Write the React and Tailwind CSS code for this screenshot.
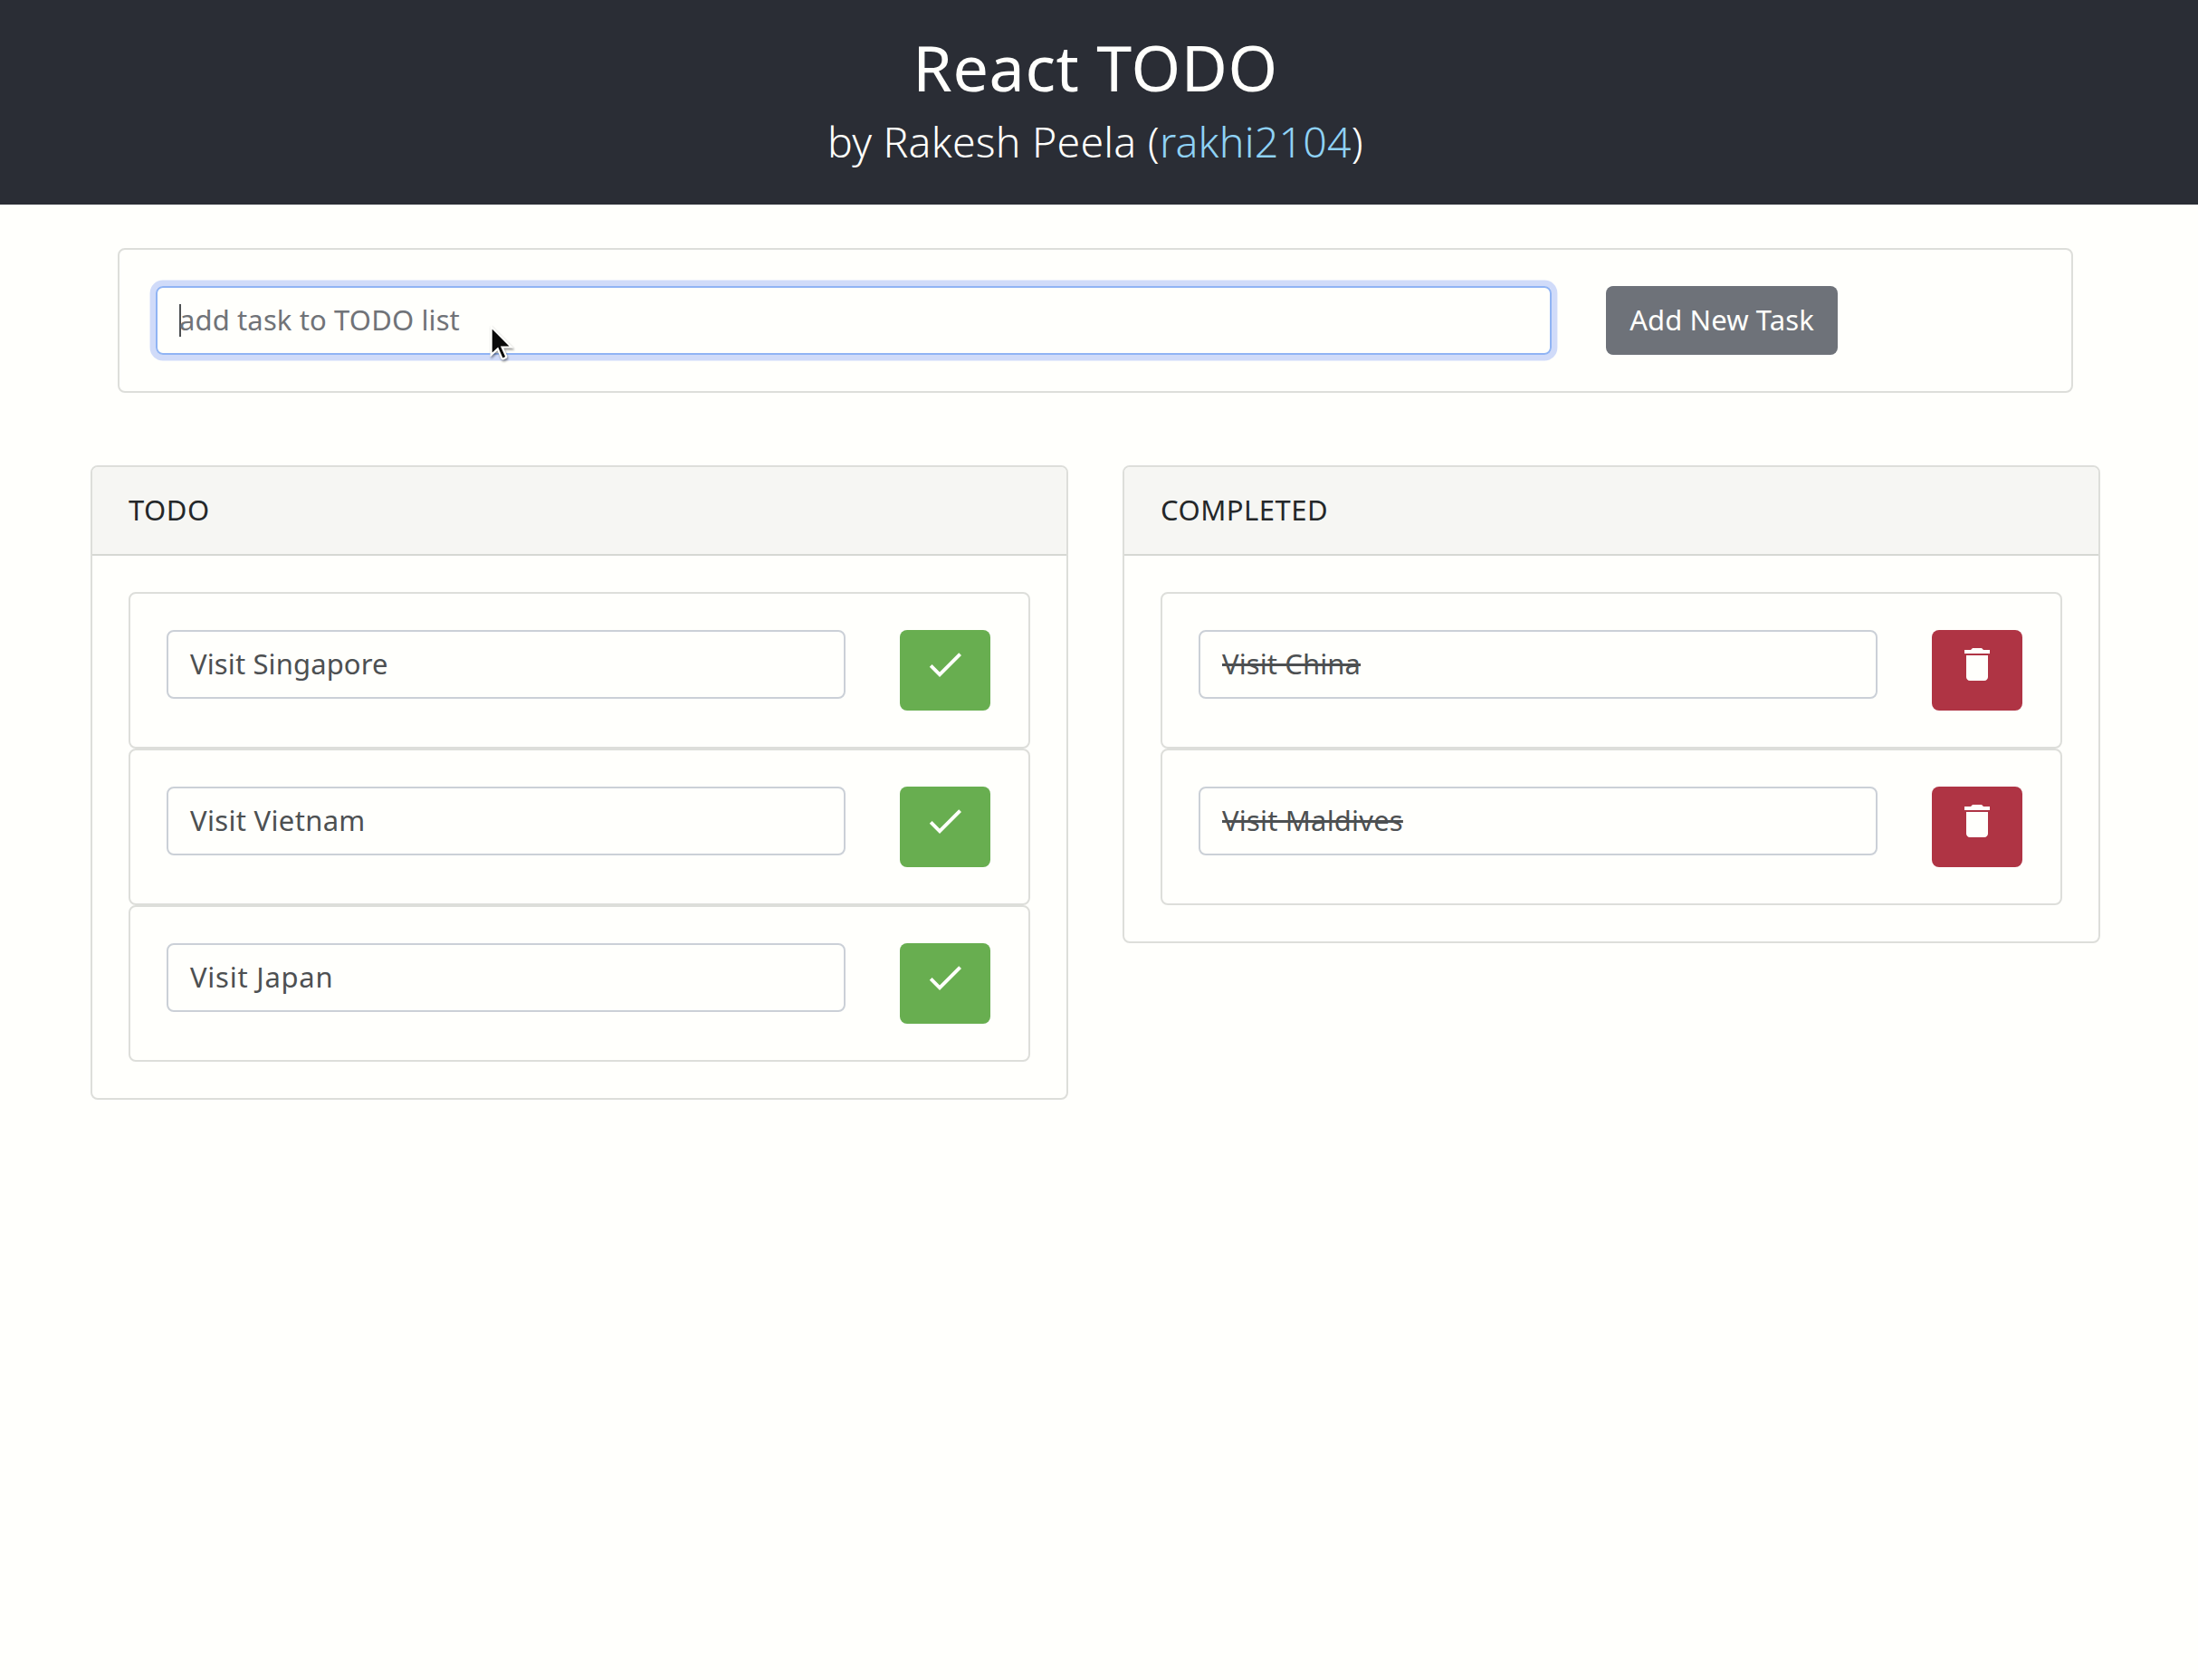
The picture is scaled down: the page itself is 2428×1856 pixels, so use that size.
import React from "react";

const todo = [
  { label: "Visit Singapore", track: "tracking-[0.12px]" },
  { label: "Visit Vietnam", track: "tracking-[0.32px]" },
  { label: "Visit Japan", track: "tracking-[0.75px]" },
];
const completed = [
  { label: "Visit China", track: "tracking-[0.1px]" },
  { label: "Visit Maldives", track: "tracking-[0.18px]" },
];

function DoneIcon() {
  return (
    <svg viewBox="0 0 24 24" className="size-12 fill-[#fffffc]">
      <path d="M9 16.2L4.8 12l-1.4 1.4L9 19 21 7l-1.4-1.4L9 16.2z" />
    </svg>
  );
}

function DeleteIcon() {
  return (
    <svg viewBox="0 0 24 24" className="size-12 fill-[#fffffc]">
      <path d="M6 19c0 1.1.9 2 2 2h8c1.1 0 2-.9 2-2V7H6v12zM19 4h-3.5l-1-1h-5l-1 1H5v2h14V4z" />
    </svg>
  );
}

function Pointer() {
  return (
    <svg
      viewBox="0 0 26 40"
      className="absolute top-[41px] left-[367px] h-[40px] w-[26px] drop-shadow-[1px_2px_1px_rgba(0,0,0,0.4)]"
    >
      <path
        d="M1.6 2V33l7.2-6.6 4.4 10q.6 1.4 2 .8l2-.9q1.4-.6.8-2l-4.4-9.8H24z"
        fill="#0a0a0a"
        stroke="#fffffc"
        strokeWidth="2.2"
      />
    </svg>
  );
}

function Task({ task, done }) {
  return (
    <li className="flex items-start gap-[60px] rounded-lg border-2 border-[#dddeda] p-10">
      <div className="flex h-[76px] w-[750px] items-center rounded-lg border-2 border-[#cbd0d7] px-6 pb-[3px] text-[#4d5052]">
        <span className={task.track + (done ? " line-through decoration-[3px]" : "")}>{task.label}</span>
      </div>
      <button
        className={
          "flex h-[89px] w-[100px] justify-center rounded-lg pt-[14px] " + (done ? "bg-[#af3444]" : "bg-[#68ae50]")
        }
      >
        {done ? <DeleteIcon /> : <DoneIcon />}
      </button>
    </li>
  );
}

function Column({ title, track, tasks, done }) {
  return (
    <section className="w-[1080px] rounded-lg border-2 border-[#dddeda]">
      <h2 className="flex h-[98px] items-center rounded-t-md border-b-2 border-[#d6d8d3] bg-[#f6f6f3] px-10 pb-[3px] text-[#242729]">
        <span className={track}>{title}</span>
      </h2>
      <ul className="p-10">
        {tasks.map((t) => (
          <Task key={t.label} task={t} done={done} />
        ))}
      </ul>
    </section>
  );
}

export default function App() {
  return (
    <div className="h-[1856px] w-[2428px] overflow-hidden bg-[#fffffc] font-['Noto_Sans','Open_Sans',sans-serif] text-[31px] leading-[48px]">
      <header className="h-[226px] bg-[#2a2d35] pr-2 pt-[30px] text-center text-[#fffffc]">
        <h1 className="text-[70px] leading-[88px] tracking-[0.6px]">
          <span>React TODO</span>
        </h1>
        <p className="mt-0.5 text-[46.5px] font-light leading-[72px] tracking-[0.2px]">
          <span>by Rakesh Peela (</span>
          <a className="text-[#8fd2f5]">rakhi2104</a>
          <span>)</span>
        </p>
      </header>
      <main className="w-[2420px]">
        <form className="mx-[130px] mt-[48px] flex gap-[60px] rounded-lg border-2 border-[#dddeda] p-10">
          <div className="relative flex h-[76px] w-[1542px] items-center rounded-lg border-2 border-[#90b4f4] px-6 text-[#707378] shadow-[0_0_0_6.4px_#d0dbf9]">
            <span className="-mr-0.5 h-9 w-0.5 bg-[#4d5052]" />
            <span className="pb-[3px] tracking-[0.12px]">add task to TODO list</span>
            <Pointer />
          </div>
          <button type="button" className="h-[76px] w-[256px] rounded-lg bg-[#6e7279] pb-[3px] text-[#fffffc]">
            <span className="tracking-[0.1px]">Add New Task</span>
          </button>
        </form>
        <div className="mx-[100px] mt-20 flex items-start gap-[60px]">
          <Column title="TODO" track="tracking-[0.5px]" tasks={todo} />
          <Column title="COMPLETED" track="tracking-[0.5px]" tasks={completed} done />
        </div>
      </main>
    </div>
  );
}
